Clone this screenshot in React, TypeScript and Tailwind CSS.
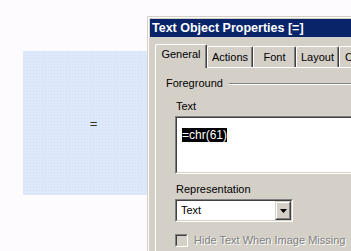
import React from "react";

const font = { fontFamily: '"Liberation Sans", Arial, sans-serif' };

function Tab({ label, w, selected }: { label: string; w: number; selected?: boolean }) {
  if (selected) {
    return (
      <div
        className="relative z-10 -mb-px flex h-[24px] shrink-0 justify-center rounded-t-[2px] border-l border-t border-r border-l-white border-t-white border-r-[#404040] bg-[#d4d0c8] pt-[3px] shadow-[inset_-1px_0_#808080]"
        style={{ width: w }}
      >
        <span className="text-[11px] leading-[13px] text-black">{label}</span>
      </div>
    );
  }
  return (
    <div
      className="flex h-[21px] shrink-0 justify-center overflow-hidden rounded-t-[2px] border-l border-t border-r border-l-white border-t-white border-r-[#404040] bg-[#d4d0c8] pt-[4px] shadow-[inset_-1px_0_#808080]"
      style={{ width: w }}
    >
      <span className="whitespace-nowrap text-[11px] leading-[13px] text-black">{label}</span>
    </div>
  );
}

export default function App() {
  return (
    <div className="relative h-[251px] w-[351px] overflow-hidden bg-[#fdfbfd]" style={font}>
      {/* Canvas object */}
      <div className="pl-[23px] pt-[51px]">
        <div className="flex h-[144px] w-[141px] items-center justify-center bg-[#dde9fb] bg-[radial-gradient(#d2e0f6_0.6px,transparent_0.8px)] bg-[length:3px_3px]">
          <span className="text-[13px] leading-[13px] text-[#333]">=</span>
        </div>
      </div>

      {/* Dialog window */}
      <div className="absolute left-[147px] top-[16px] h-[260px] w-[230px] border-l border-t border-[#d4d0c8]">
        <div className="h-full w-full border-l border-t border-white bg-[#d4d0c8] pl-px pt-px">
          <div className="h-[18px] bg-[#0a246a] pl-[2px] text-[12.5px] font-bold leading-[18px] text-white whitespace-nowrap">
            Text Object Properties [=]
          </div>

          <div className="pl-[5px] pt-[7px]">
            <div className="flex items-end">
              <Tab label="General" w={52} selected />
              <Tab label="Actions" w={46} />
              <Tab label="Font" w={43} />
              <Tab label="Layout" w={43} />
              <Tab label="Caption" w={50} />
            </div>

            <div className="h-[200px] border-l border-t border-white pl-[10px]">
              <div className="mt-[9px] flex items-center">
                <span className="text-[11px] leading-[13px] text-black">Foreground</span>
                <div className="ml-[6px] h-[2px] flex-1 border-t border-b border-t-[#808080] border-b-white" />
              </div>

              <div className="ml-[10px] mt-[10px] text-[11px] leading-[13px] text-black">Text</div>

              <div className="ml-[9px] mt-[3px] h-[58px] w-[220px] border-l border-t border-r border-b border-l-[#808080] border-t-[#808080] border-r-white border-b-white">
                <div className="h-full w-full border-l border-t border-r border-b border-l-[#404040] border-t-[#404040] border-r-[#d4d0c8] border-b-[#d4d0c8] bg-white pl-[5px] pt-[4px]">
                  <span className="bg-black text-[12px] leading-[12px] text-white">=chr(61)</span>
                </div>
              </div>

              <div className="ml-[10px] mt-[9px] text-[11px] leading-[13px] text-black">Representation</div>

              <div className="ml-[9px] mt-[3px] h-[23px] w-[118px] border-l border-t border-r border-b border-l-[#808080] border-t-[#808080] border-r-white border-b-white">
                <div className="flex h-full w-full border-l border-t border-r border-b border-l-[#404040] border-t-[#404040] border-r-[#d4d0c8] border-b-[#d4d0c8] bg-white">
                  <div className="flex flex-1 items-center pl-[4px] text-[11px] leading-[13px] text-black">Text</div>
                  <div className="h-full w-[16px] border-l border-t border-r border-b border-l-[#d4d0c8] border-t-[#d4d0c8] border-r-[#404040] border-b-[#404040]">
                    <div className="flex h-full w-full items-center justify-center border-l border-t border-r border-b border-l-white border-t-white border-r-[#808080] border-b-[#808080] bg-[#d4d0c8]">
                      <svg width="7" height="4" viewBox="0 0 7 4">
                        <path d="M0 0H7L3.5 4Z" fill="#000" />
                      </svg>
                    </div>
                  </div>
                </div>
              </div>

              <div className="ml-[9px] mt-[12px] flex items-center">
                <div className="h-[13px] w-[13px] border-l border-t border-r border-b border-l-[#808080] border-t-[#808080] border-r-white border-b-white">
                  <div className="h-full w-full border-l border-t border-r border-b border-l-[#404040] border-t-[#404040] border-r-[#d4d0c8] border-b-[#d4d0c8] bg-[#d4d0c8]" />
                </div>
                <span className="ml-[6px] whitespace-nowrap text-[11px] leading-[13px] text-[#808080] [text-shadow:1px_1px_0_#fff]">
                  Hide Text When Image Missing
                </span>
              </div>
            </div>
          </div>
        </div>
      </div>
    </div>
  );
}
